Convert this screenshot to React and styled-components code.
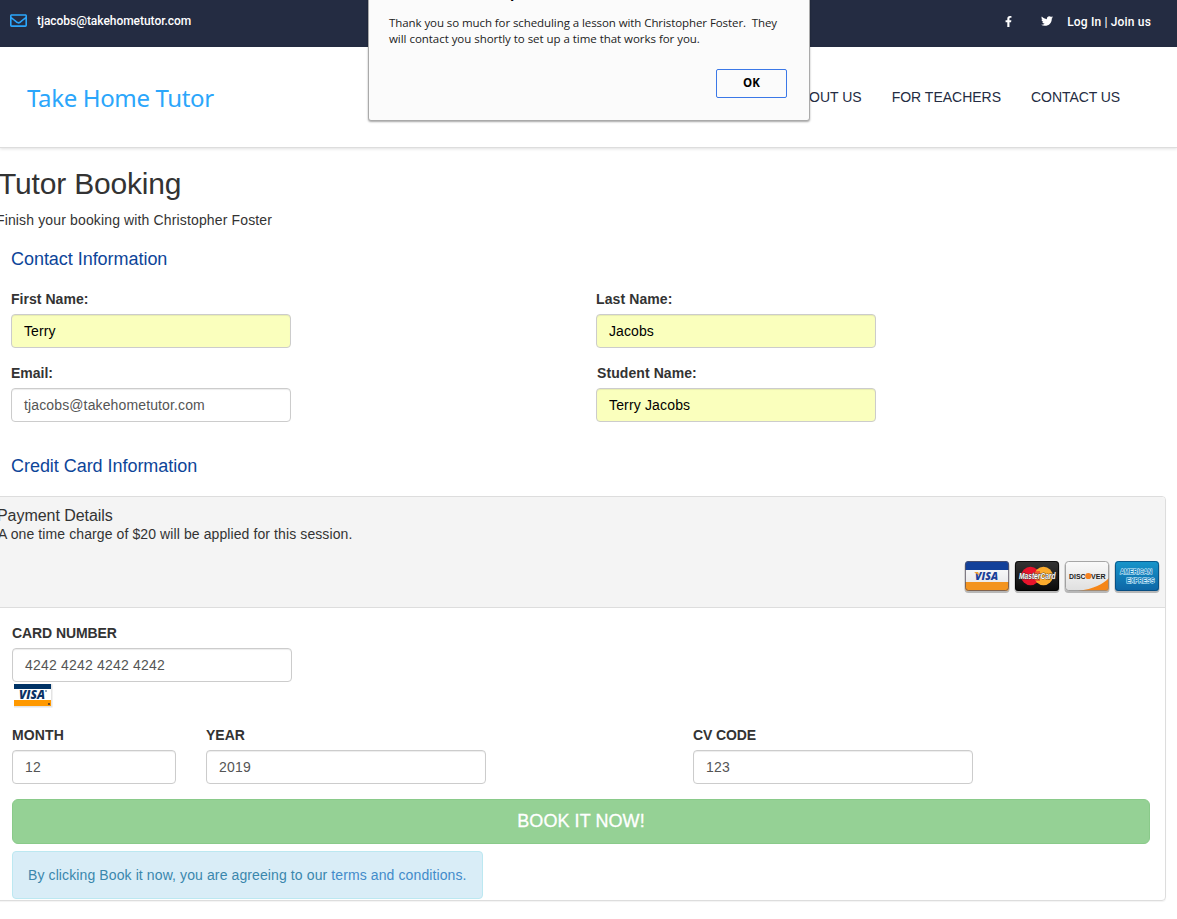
import React from "react";
import styled, { createGlobalStyle } from "styled-components";
import { FaRegEnvelope, FaFacebookF, FaTwitter } from "react-icons/fa";

const Global = createGlobalStyle`
  * { box-sizing: border-box; }
  body { margin: 0; background: #fff; color: #333; overflow: hidden;
    font: 14px/20px "Liberation Sans", Arial, sans-serif; }
`;
const Page = styled.div`position: relative; width: 1177px; height: 919px; overflow: hidden;`;
const Line = styled.span`
  display: inline-block; white-space: pre;
  letter-spacing: ${(p) => p.$ls || 0}px;
`;
const TopBar = styled.div`
  height: 47px; background: #242c42; color: #fff; font-size: 12px;
  display: flex; justify-content: space-between; padding: 11px 26px 0 10px;
  font-family: Roboto, sans-serif; font-weight: 500;
`;
const Mail = styled.div`
  display: flex; gap: 10px; height: 20px; line-height: 20px;
  svg { margin-top: 1px; }
`;
const Social = styled.div`
  display: flex; height: 20px; align-items: center;
  svg:first-child { margin-right: 27px; }
  svg:nth-child(2) { margin-right: 14px; }
  span { padding-top: 2px; }
`;
const Header = styled.header`
  height: 101px; display: flex; justify-content: space-between; align-items: center;
  padding: 0 57px 0 27px; border-bottom: 1px solid #ddd; box-shadow: 0 1px 3px rgba(0,0,0,.12);
`;
const Logo = styled.div`
  font: 24px/34px "Noto Sans", sans-serif;
  color: #2ba6fb; white-space: nowrap; padding-top: 1px;
`;
const Nav = styled.nav`display: flex; gap: 30px; color: #242c42; white-space: nowrap;`;
const Dialog = styled.div`
  position: absolute; left: 368px; top: -60px; width: 442px; height: 181px; padding: 43px 20px 0 20px;
  border: 1px solid #aaa; border-radius: 3px; background: #fbfbfb; color: #222;
  box-shadow: 0 1px 2px rgba(0,0,0,.35);
  font: 11.5px/16px "Open Sans", sans-serif;
`;
const DialogTitle = styled.div`height: 31px; padding-left: 121px; font: bold 14px/18px "Open Sans", sans-serif; color: #000;`;
const DialogActions = styled.div`display: flex; justify-content: flex-end; padding: 22px 2px 0 0;`;
const OkButton = styled.button`
  width: 71px; height: 29px; padding: 0 0 2px; border: 1px solid #3b78e7; border-radius: 2px; background: #fbfbfb;
  font: bold 11.5px/16px "Open Sans", sans-serif; color: #000;
`;
const Title = styled.h2`margin: 19px 0 0 -2px; font-size: 30px; line-height: 33px; font-weight: normal;`;
const Lead = styled.p`margin: 10px 0 0 -4px;`;
const Section = styled.h4`
  margin: ${(p) => p.$top}px 0 0 11px; font-size: 18px; line-height: 20px; font-weight: normal; color: #0d4599;
`;
const ContactGrid = styled.div`
  display: grid; grid-template-columns: 585px 280px; row-gap: 15px; padding: 20px 0 0 11px;
`;
const Field = styled.label`display: block; width: ${(p) => p.$w || 280}px;`;
const Label = styled.div`font-weight: bold; line-height: 20px; margin-bottom: 5px; padding-left: ${(p) => p.$indent || 0}px;`;
const Input = styled.div`
  height: 34px; border: 1px solid #ccc; border-radius: 4px; padding: 6px 12px; line-height: 20px;
  color: ${(p) => (p.$filled ? "#000" : "#555")}; background: ${(p) => (p.$filled ? "#faffbd" : "#fff")};
  box-shadow: inset 0 1px 1px rgba(0,0,0,.075);
`;
const Panel = styled.div`
  width: 1176px; height: 405px; margin: 20px 0 0 -10px; border: 1px solid #ddd; border-radius: 4px;
  box-shadow: 0 1px 1px rgba(0,0,0,.05);
`;
const PanelHead = styled.div`
  height: 111px; background: #f4f4f4; border-bottom: 1px solid #ddd; border-radius: 3px 3px 0 0;
  padding: 10px 4px 0 6px; display: flex; flex-direction: column;
`;
const PanelTitle = styled.div`font-size: 16px; line-height: 18px;`;
const PanelNote = styled.div`line-height: 20px; padding-left: 1px; margin-top: -1px;`;
const Cards = styled.div`display: flex; gap: 2px; justify-content: flex-end; padding-top: 16px;`;
const PanelBody = styled.div`padding: 15px 15px 0 21px;`;
const VisaSmall = styled.div`height: 28px; padding: 1px 0 0 1px; svg { display: block; }`;
const ExpiryRow = styled.div`display: grid; grid-template-columns: 194px 487px 280px; padding-top: 15px;`;
const BookButton = styled.button`
  display: block; width: 1138px; height: 45px; margin: 15px 0 7px; border: 1px solid #8aca8a; border-radius: 6px; padding: 0 0 2px 0;
  background: #95d195; color: #fff; font: 18px/24px "Liberation Sans", Arial, sans-serif;
  -webkit-text-stroke: 0.3px #fff;
`;
const Notice = styled.div`
  width: 471px; height: 48px; padding: 13px 15px; border: 1px solid #bce8f1; border-radius: 4px;
  background: #d9edf7; color: #3a87ad; white-space: nowrap;
`;
const TermsLink = styled.a`color: #428bca;`;

function FormField({ label, value, filled, w, indent, ls, vls }) {
  return (
    <Field $w={w}>
      <Label $indent={indent}><Line $ls={ls}>{label}</Line></Label>
      <Input $filled={filled}><Line $ls={vls}>{value}</Line></Input>
    </Field>
  );
}

function CardFrame({ id, from, to, edge, children }) {
  return (
    <svg width="48" height="34" viewBox="0 0 48 34">
      <defs>
        <linearGradient id={id} x1="0" y1="0" x2="0" y2="1">
          <stop offset="0" stopColor={from} /><stop offset="1" stopColor={to} />
        </linearGradient>
        <clipPath id={id + "c"}><rect x="2" y="1" width="44" height="30" rx="3.5" /></clipPath>
      </defs>
      <rect x="1.5" y="2" width="45" height="31" rx="4" fill="#000" opacity=".25" />
      <g clipPath={`url(#${id}c)`}>
        <rect x="2" y="1" width="44" height="30" fill={`url(#${id})`} />
        {children}
      </g>
      <rect x="2.5" y="1.5" width="43" height="29" rx="3" fill="none" stroke={edge} strokeOpacity=".75" />
    </svg>
  );
}

function PaymentCards() {
  return (
    <Cards>
      <CardFrame id="visa" from="#fff" to="#e2e2e5" edge="#5a5360">
        <rect x="2" y="1" width="44" height="9" fill="#12409a" />
        <rect x="2" y="22" width="44" height="9" fill="#f3941f" />
        <text x="12" y="20" textLength="23" lengthAdjust="spacingAndGlyphs" fontFamily="Open Sans" fontSize="11" fontWeight="800" fontStyle="italic" fill="#1a3f98">VISA</text>
        <path d="M11 12h4l1.3 3.5z" fill="#f3a12f" />
      </CardFrame>
      <CardFrame id="mc" from="#343434" to="#090909" edge="#000">
        <circle cx="17.5" cy="16" r="9.3" fill="#e8142c" />
        <circle cx="30.5" cy="16" r="9.3" fill="#fbab2d" />
        <path d="M22 12h5M21.5 14h5M21.5 18h5M22 20h5" stroke="#e8142c" />
        <text x="6" y="19" textLength="36.5" lengthAdjust="spacingAndGlyphs" fontFamily="Liberation Sans" fontSize="8.5" fontWeight="700" fontStyle="italic" fill="#fff" stroke="#333" strokeWidth=".8" paintOrder="stroke">MasterCard</text>
      </CardFrame>
      <CardFrame id="disc" from="#fafafa" to="#dfdfdf" edge="#8a8a8a">
        <path d="M15 31C31 29 40 24 46 18V31Z" fill="#f58618" />
        <text x="6" y="19" textLength="16.5" lengthAdjust="spacingAndGlyphs" fontFamily="Liberation Sans" fontSize="8" fontWeight="700" fill="#222">DISC</text>
        <circle cx="25.3" cy="16" r="3.1" fill="#f58220" />
        <text x="28" y="19" textLength="14.5" lengthAdjust="spacingAndGlyphs" fontFamily="Liberation Sans" fontSize="8" fontWeight="700" fill="#222">VER</text>
      </CardFrame>
      <CardFrame id="amex" from="#1796cb" to="#0d65a5" edge="#064675">
        <g fontFamily="Liberation Sans" fontSize="7" fontWeight="700" fill="#127db8" stroke="#d8f2ff" strokeWidth="1.2" paintOrder="stroke">
          <text x="7" y="14" textLength="32" lengthAdjust="spacingAndGlyphs">AMERICAN</text>
          <text x="13.5" y="22.5" textLength="28" lengthAdjust="spacingAndGlyphs">EXPRESS</text>
        </g>
      </CardFrame>
    </Cards>
  );
}

export default function App() {
  return (
    <Page>
      <Global />
      <TopBar>
        <Mail><FaRegEnvelope size={17} color="#2ba6fb" /><Line $ls={-0.04}>tjacobs@takehometutor.com</Line></Mail>
        <Social><FaFacebookF size={11} /><FaTwitter size={12} /><Line $ls={0.17}>Log In | Join us</Line></Social>
      </TopBar>
      <Header>
        <Logo><Line $ls={-0.35}>Take Home Tutor</Line></Logo>
        <Nav><Line>ABOUT US</Line><Line>FOR TEACHERS</Line><Line $ls={-0.08}>CONTACT US</Line></Nav>
      </Header>
      <Title><Line $ls={-0.18}>Tutor Booking</Line></Title>
      <Lead><Line $ls={0.14}>Finish your booking with Christopher Foster</Line></Lead>
      <Section $top={19}><Line $ls={-0.04}>Contact Information</Line></Section>
      <ContactGrid>
        <FormField label="First Name:" value="Terry" filled ls={0.04} vls={0.1} />
        <FormField label="Last Name:" value="Jacobs" filled ls={0.1} vls={0.08} />
        <FormField label="Email:" value="tjacobs@takehometutor.com" vls={0.13} />
        <FormField label="Student Name:" value="Terry Jacobs" filled indent={1} ls={0.08} vls={0.16} />
      </ContactGrid>
      <Section $top={34}><Line $ls={-0.04}>Credit Card Information</Line></Section>
      <Panel>
        <PanelHead>
          <PanelTitle><Line $ls={-0.05}>Payment Details</Line></PanelTitle>
          <PanelNote><Line $ls={0.1}>A one time charge of $20 will be applied for this session.</Line></PanelNote>
          <PaymentCards />
        </PanelHead>
        <PanelBody>
          <FormField label="CARD NUMBER" value="4242 4242 4242 4242" ls={-0.08} vls={0.2} />
          <VisaSmall>
            <svg width="40" height="25" viewBox="0 0 40 25">
              <rect x="1" y="1" width="38.5" height="23.5" fill="#e4e4e4" />
              <rect x="1" y="1" width="37" height="22" fill="#fff" />
              <rect x="1" y="1" width="37" height="5" fill="#003366" />
              <rect x="1" y="17" width="37" height="6" fill="#ff9900" />
              <text x="6" y="15.7" textLength="26" lengthAdjust="spacingAndGlyphs" fontFamily="Open Sans" fontSize="12.5" fontWeight="800" fontStyle="italic" fill="#0b3265">VISA</text>
              <circle cx="33" cy="8" r=".8" fill="#0b3265" /><circle cx="36" cy="21" r="1.1" fill="#4b3a35" />
            </svg>
          </VisaSmall>
          <ExpiryRow>
            <FormField label="MONTH" value="12" w={164} ls={0.15} vls={0.2} />
            <FormField label="YEAR" value="2019" vls={0.25} />
            <FormField label="CV CODE" value="123" ls={-0.1} vls={0.2} />
          </ExpiryRow>
          <BookButton><Line $ls={0.06}>BOOK IT NOW!</Line></BookButton>
          <Notice><Line $ls={0.107}>By clicking Book it now, you are agreeing to our <TermsLink>terms and conditions.</TermsLink></Line></Notice>
        </PanelBody>
      </Panel>
      <Dialog>
        <DialogTitle>p</DialogTitle>
        <Line $ls={-0.08}>{"Thank you so much for scheduling a lesson with Christopher Foster.  They"}</Line>
        <Line $ls={-0.04}>will contact you shortly to set up a time that works for you.</Line>
        <DialogActions><OkButton>OK</OkButton></DialogActions>
      </Dialog>
    </Page>
  );
}
